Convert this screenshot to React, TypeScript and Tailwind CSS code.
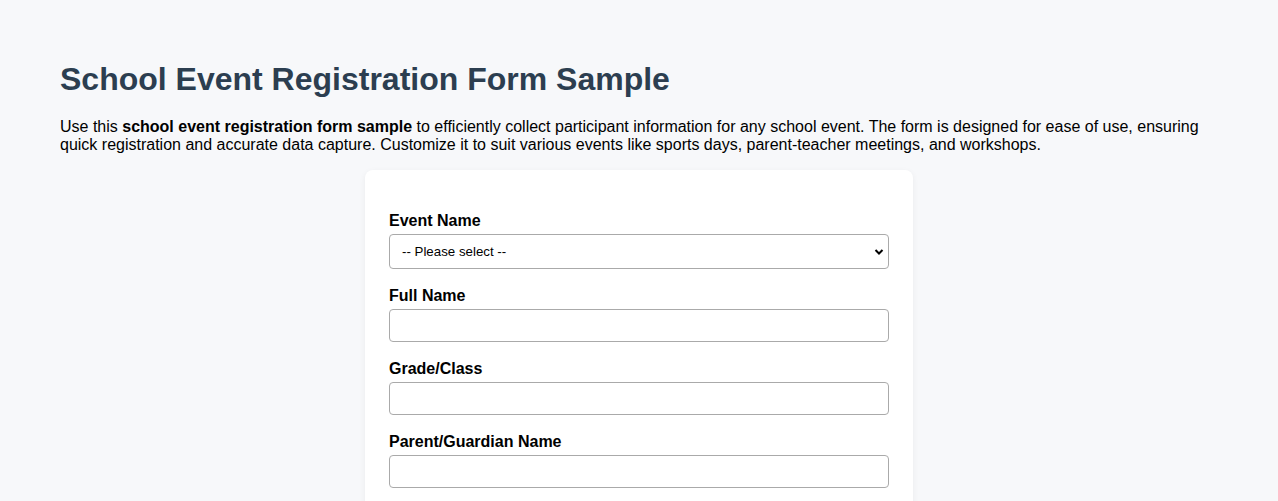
import React from "react";

const Field = ({ label, children }: { label: string; children: React.ReactNode }) => (
  <div className="mb-[18px]">
    <label className="block text-[16px] font-bold leading-[18px] mb-[4px] text-black">{label}</label>
    {children}
  </div>
);

export default function App() {
  return (
    <div className="min-h-[501px] bg-[#f7f8fa] px-[60px] pt-[61px] text-black" style={{ fontFamily: '"Liberation Sans", Arial, sans-serif' }}>
      <h1 className="text-[32px] font-bold leading-[37px] text-[#2c3e50]">School Event Registration Form Sample</h1>
      <p className="mt-[20px] text-[16px] leading-[17.5px]">
        Use this <strong>school event registration form sample</strong> to efficiently collect participant information for any school event. The form is designed for ease of use, ensuring quick registration and accurate data capture. Customize it to suit various events like sports days, parent-teacher meetings, and workshops.
      </p>
      <div className="mx-auto mt-[17px] w-[548px] rounded-[8px] bg-white px-[24px] pt-[42px] pb-[24px] shadow-[0_2px_6px_rgba(0,0,0,0.06)]">
        <Field label="Event Name">
          <div className="relative h-[35px] w-[500px] rounded-[4px] border border-[#aaaaaa] bg-white">
            <span className="absolute left-[12px] top-[8px] text-[13.3px] leading-[18px]">-- Please select --</span>
            <svg className="absolute right-[4px] top-[13px]" width="10" height="8" viewBox="0 0 10 8">
              <path d="M1.5 2 L5 5.5 L8.5 2" fill="none" stroke="#000" strokeWidth="2" />
            </svg>
          </div>
        </Field>
        <Field label="Full Name">
          <input className="block h-[33px] w-[500px] rounded-[4px] border border-[#aaaaaa] bg-white" />
        </Field>
        <Field label="Grade/Class">
          <input className="block h-[33px] w-[500px] rounded-[4px] border border-[#aaaaaa] bg-white" />
        </Field>
        <Field label="Parent/Guardian Name">
          <input className="block h-[33px] w-[500px] rounded-[4px] border border-[#aaaaaa] bg-white" />
        </Field>
        <Field label="Contact Number">
          <input className="block h-[33px] w-[500px] rounded-[4px] border border-[#aaaaaa] bg-white" />
        </Field>
      </div>
    </div>
  );
}
